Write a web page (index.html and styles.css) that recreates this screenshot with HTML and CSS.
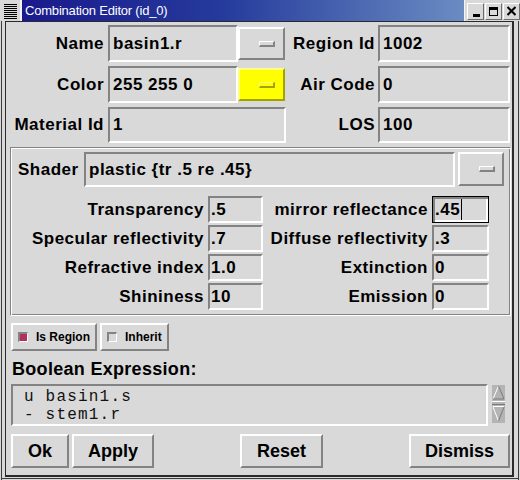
FILE: index.html
```html
<!DOCTYPE html>
<html>
<head>
<meta charset="utf-8">
<link rel="stylesheet" href="styles.css">
</head>
<body>
<div class="window">
  <div class="titlebar">
    <div class="tb-menu"><span class="tb-lines"></span></div>
    <div class="tb-title">Combination Editor (id_0)</div>
    <div class="tb-buttons">
      <span class="tb-btn"><svg width="15" height="15" viewBox="0 0 15 15"><rect x="5" y="10" width="7" height="3" fill="#000"/></svg></span>
      <span class="tb-btn"><svg width="15" height="15" viewBox="0 0 15 15"><rect x="3.5" y="3.5" width="8" height="8" fill="none" stroke="#000" stroke-width="1"/><rect x="3" y="3" width="9" height="3" fill="#000"/></svg></span>
      <span class="tb-btn"><svg width="15" height="15" viewBox="0 0 15 15"><path d="M3.5 3 L11.5 11 M11.5 3 L3.5 11" stroke="#000" stroke-width="2" fill="none"/></svg></span>
    </div>
  </div>
  <div class="client">
    <div class="top-grid">
      <div class="lbl lbl-c1">Name</div>
      <div class="combo"><div class="entry entry-name">basin1.r</div><div class="mbtn"><span class="ind"></span></div></div>
      <div class="lbl lbl-c3">Region Id</div>
      <div class="entry">1002</div>

      <div class="lbl lbl-c1">Color</div>
      <div class="combo"><div class="entry entry-name">255 255 0</div><div class="mbtn mbtn-yellow"><span class="ind ind-yellow"></span></div></div>
      <div class="lbl lbl-c3">Air Code</div>
      <div class="entry">0</div>

      <div class="lbl lbl-c1">Material Id</div>
      <div class="entry">1</div>
      <div class="lbl lbl-c3">LOS</div>
      <div class="entry">100</div>
    </div>

    <div class="shader-frame">
      <div class="shader-row">
        <div class="lbl shader-lbl">Shader</div>
        <div class="entry shader-entry">plastic {tr .5 re .45}</div>
        <div class="mbtn shader-mbtn"><span class="ind"></span></div>
      </div>
      <div class="props">
        <div class="lbl plbl">Transparency</div>
        <div class="entry sentry">.5</div>
        <div class="lbl plbl">mirror reflectance</div>
        <div class="entry sentry focus">.45<span class="caret"></span></div>

        <div class="lbl plbl">Specular reflectivity</div>
        <div class="entry sentry">.7</div>
        <div class="lbl plbl">Diffuse reflectivity</div>
        <div class="entry sentry">.3</div>

        <div class="lbl plbl">Refractive index</div>
        <div class="entry sentry">1.0</div>
        <div class="lbl plbl">Extinction</div>
        <div class="entry sentry">0</div>

        <div class="lbl plbl">Shininess</div>
        <div class="entry sentry">10</div>
        <div class="lbl plbl">Emission</div>
        <div class="entry sentry">0</div>
      </div>
    </div>

    <div class="checks">
      <div class="chk chk-region"><span class="chk-ind chk-on"></span><span>Is Region</span></div>
      <div class="chk chk-inherit"><span class="chk-ind"></span><span>Inherit</span></div>
    </div>

    <div class="bool-label">Boolean Expression:</div>
    <div class="bool-row">
      <div class="textbox"><div class="tline">u basin1.s</div><div class="tline">- stem1.r</div></div>
      <div class="scroll">
        <svg width="13" height="38" viewBox="0 0 13 38">
          <rect x="0" y="0" width="13" height="38" fill="#b4b4b4"/>
          <path d="M6.5 1 L1 14" stroke="#fff" stroke-width="1" fill="none"/>
          <path d="M6.5 1 L12 14 L1 14" stroke="#7a7a7a" stroke-width="1" fill="none"/>
          <line x1="0" y1="16.5" x2="13" y2="16.5" stroke="#fff"/>
          <line x1="0" y1="19.5" x2="13" y2="19.5" stroke="#7a7a7a"/>
          <path d="M1 21.5 L12 21.5" stroke="#fff" stroke-width="1"/>
          <path d="M1 22 L6.5 36" stroke="#fff" stroke-width="1" fill="none"/>
          <path d="M12 22 L6.5 36" stroke="#7a7a7a" stroke-width="1" fill="none"/>
        </svg>
      </div>
    </div>

    <div class="buttons">
      <div class="btn-group">
        <div class="btn btn-ok">Ok</div>
        <div class="btn btn-apply">Apply</div>
      </div>
      <div class="btn btn-reset">Reset</div>
      <div class="btn btn-dismiss">Dismiss</div>
    </div>
  </div>
</div>
</body>
</html>
```

FILE: styles.css
```css
html, body {
  margin: 0;
  padding: 0;
}
body {
  width: 520px;
  height: 480px;
  overflow: hidden;
  background: #d9d9d9;
  font-family: "Liberation Sans", Arial, sans-serif;
  color: #000;
}
.window {
  width: 520px;
  height: 480px;
  display: flex;
  flex-direction: column;
  background: #d9d9d9;
  box-shadow: inset 1px 0 0 #d9d9d9, inset 2px 0 0 #3c3c3c,
              inset -1px 0 0 #d9d9d9, inset -2px 0 0 #3c3c3c,
              inset 0 -1px 0 #d9d9d9, inset 0 -2px 0 #3c3c3c;
}

/* title bar */
.titlebar {
  flex: none;
  height: 21px;
  display: flex;
}
.tb-menu {
  width: 22px;
  height: 21px;
  box-sizing: border-box;
  background: #d9d9d9;
  border-right: 2px solid #f4f4f4;
  padding: 4px 0 0 4px;
}
.tb-lines {
  display: block;
  width: 13px;
  height: 15px;
  background: repeating-linear-gradient(to bottom, #000 0, #000 1px, transparent 1px, transparent 2px);
}
.tb-title {
  flex: 1;
  background: linear-gradient(to right, #1a1a8c 0%, #253a9c 45%, #6a8cc2 100%);
  color: #fff;
  font-family: "Liberation Sans", Arial, sans-serif;
  font-size: 13px;
  letter-spacing: -0.2px;
  line-height: 21px;
  padding-left: 3px;
  white-space: nowrap;
}
.tb-buttons {
  width: 56px;
  display: flex;
  gap: 1px;
  padding: 3px 0 0 2px;
  box-sizing: border-box;
  background: #d9d9d9;
  border-left: 1px solid #f4f4f4;
}
.tb-btn {
  width: 17px;
  height: 17px;
  box-sizing: border-box;
  border: 1px solid;
  border-color: #fff #6e6e6e #6e6e6e #fff;
  display: flex;
}
.tb-btn svg {
  display: block;
}

/* client area */
.client {
  flex: 1;
  min-height: 0;
  margin: 0 6px 3px 5px;
  border-style: solid;
  border-color: #2a2a2a;
  border-width: 1px 2px 2px 1px;
  padding: 3px 1px 0 5px;
  display: flex;
  flex-direction: column;
}

.lbl {
  font-size: 17px;
  font-weight: bold;
  letter-spacing: 0.5px;
  white-space: nowrap;
  display: flex;
  align-items: center;
  justify-content: flex-end;
}
.entry {
  box-sizing: border-box;
  border: 2px solid;
  border-color: #838383 #fff #fff #838383;
  font-size: 17px;
  font-weight: bold;
  letter-spacing: 0.5px;
  white-space: nowrap;
  overflow: hidden;
  display: flex;
  align-items: center;
  padding-left: 3px;
}
.mbtn {
  box-sizing: border-box;
  border: 2px solid;
  border-color: #fff #838383 #838383 #fff;
  display: flex;
  align-items: center;
  justify-content: flex-end;
}
.ind {
  display: block;
  width: 16px;
  height: 6px;
  box-sizing: border-box;
  border-style: solid;
  border-width: 1px 2px 2px 1px;
  border-color: #fff #838383 #838383 #fff;
}
.mbtn-yellow {
  background: #ffff00;
  border-color: #ffff80 #a3a300 #a3a300 #ffff80;
}
.ind-yellow {
  border-color: #ffff80 #a3a300 #a3a300 #ffff80;
}

/* top grid */
.top-grid {
  display: grid;
  grid-template-columns: 97px 178px 92px 132px;
  grid-template-rows: 37px 37px 36px;
  row-gap: 4px;
}
.lbl-c1 {
  padding-right: 4px;
}
.lbl-c3 {
  padding-right: 3px;
}
.combo {
  display: flex;
}
.entry-name {
  width: 130px;
  flex: none;
}
.combo .mbtn {
  width: 47px;
  margin: 2px 0 2px 0;
  padding-right: 8px;
}

/* shader frame */
.shader-frame {
  margin: 4px 0 0 -1px;
  border: 1px solid;
  border-color: #838383 #fff #fff #838383;
  box-shadow: inset 1px 1px 0 #fff, inset -1px -1px 0 #838383;
  padding: 4px 0 5px 0;
}
.shader-row {
  display: flex;
  align-items: flex-start;
  height: 35px;
  padding: 0 6px 0 7px;
}
.shader-lbl {
  width: 66px;
  height: 35px;
  justify-content: flex-start;
  flex: none;
}
.shader-entry {
  flex: 1;
  height: 35px;
}
.shader-mbtn {
  width: 46px;
  height: 34px;
  margin-left: 3px;
  padding-right: 7px;
  flex: none;
}
.props {
  margin-top: 9px;
  display: grid;
  grid-template-columns: 193px 55px 161px 57px;
  grid-auto-rows: 27px;
  column-gap: 4px;
  row-gap: 2px;
}
.plbl {
  padding-right: 0;
}
.sentry {
  padding-left: 1px;
}
.sentry.focus {
  border: 1px solid #000;
  box-shadow: inset 2px 2px 0 #838383, inset -2px -2px 0 #fff;
  padding-left: 2px;
}
.caret {
  display: inline-block;
  width: 1px;
  height: 21px;
  background: #000;
  margin-left: 1px;
}

/* check buttons */
.checks {
  display: flex;
  gap: 3px;
  margin-top: 7px;
}
.chk {
  height: 28px;
  box-sizing: border-box;
  border: 2px solid;
  border-color: #fff #838383 #838383 #fff;
  display: flex;
  align-items: center;
  padding-left: 5px;
  font-size: 12px;
  font-weight: bold;
  white-space: nowrap;
}
.chk-region {
  width: 86px;
}
.chk-inherit {
  width: 69px;
}
.chk-ind {
  display: block;
  width: 10px;
  height: 10px;
  box-sizing: border-box;
  border-style: solid;
  border-width: 2px 1px 1px 2px;
  border-color: #838383 #fff #fff #838383;
  background: #d9d9d9;
  margin-right: 8px;
  flex: none;
}
.chk-on {
  background: #b03060;
}

/* boolean expression */
.bool-label {
  margin-top: 7px;
  font-size: 18px;
  font-weight: bold;
  letter-spacing: 0.3px;
  line-height: 22px;
  padding-left: 1px;
  white-space: nowrap;
}
.bool-row {
  margin-top: 4px;
  display: flex;
  align-items: flex-start;
}
.textbox {
  width: 477px;
  height: 42px;
  box-sizing: border-box;
  border: 2px solid;
  border-color: #838383 #fff #fff #838383;
  padding: 2px 0 0 11px;
  font-family: "Liberation Mono", "Courier New", monospace;
  font-size: 16px;
  letter-spacing: 1.2px;
  line-height: 18px;
  white-space: pre;
  color: #111;
}
.tline {
  height: 18px;
}
.scroll {
  width: 13px;
  height: 38px;
  margin: 1px 0 0 4px;
}
.scroll svg {
  display: block;
}

/* buttons */
.buttons {
  margin-top: 8px;
  margin-right: 1px;
  display: flex;
  justify-content: space-between;
}
.btn-group {
  display: flex;
  gap: 3px;
}
.btn {
  height: 34px;
  box-sizing: border-box;
  border: 2px solid;
  border-color: #fff #838383 #838383 #fff;
  font-size: 18px;
  font-weight: bold;
  display: flex;
  align-items: center;
  justify-content: center;
  white-space: nowrap;
}
.btn-ok { width: 58px; }
.btn-apply { width: 82px; }
.btn-reset { width: 83px; }
.btn-dismiss { width: 101px; }
```
